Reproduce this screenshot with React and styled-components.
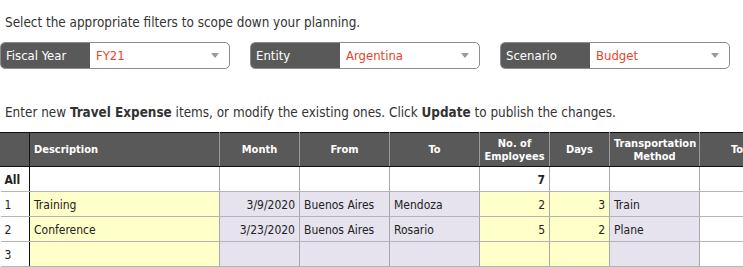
import React from 'react'
import styled, { createGlobalStyle } from 'styled-components'

const filters = [
  { label: 'Fiscal Year', value: 'FY21' },
  { label: 'Entity', value: 'Argentina' },
  { label: 'Scenario', value: 'Budget' },
]

const columns = [
  { title: '', width: 29 },
  { title: 'Description', width: 190, align: 'left' },
  { title: 'Month', width: 80 },
  { title: 'From', width: 90 },
  { title: 'To', width: 90 },
  { title: 'No. of Employees', width: 70 },
  { title: 'Days', width: 60 },
  { title: 'Transportation Method', width: 90 },
  { title: 'Total', width: 90 },
]

// tone per column: w = white, y = yellow, p = lavender
const tones = ['w', 'y', 'p', 'p', 'p', 'y', 'y', 'p', 'w']

const rows = [
  ['1', 'Training', '3/9/2020', 'Buenos Aires', 'Mendoza', '2', '3', 'Train', ''],
  ['2', 'Conference', '3/23/2020', 'Buenos Aires', 'Rosario', '5', '2', 'Plane', ''],
  ['3', '', '', '', '', '', '', '', ''],
]

const rightAligned = [2, 5, 6]

function App() {
  return (
    <Page>
      <GlobalStyle />
      <Intro>Select the appropriate filters to scope down your planning.</Intro>
      <FilterBar>
        {filters.map(f => (
          <Select key={f.label}>
            <SelectLabel>{f.label}</SelectLabel>
            <SelectValue>{f.value}</SelectValue>
            <Caret />
          </Select>
        ))}
      </FilterBar>
      <Hint>
        Enter new <b>Travel Expense</b> items, or modify the existing ones. Click <b>Update</b> to publish the changes.
      </Hint>
      <Grid>
        <colgroup>
          {columns.map((c, i) => <col key={i} style={{ width: c.width }} />)}
        </colgroup>
        <thead>
          <tr>
            {columns.map((c, i) => (
              <HeadCell key={i} $first={i === 0} $align={c.align}>{c.title}</HeadCell>
            ))}
          </tr>
        </thead>
        <tbody>
          <tr>
            <Cell $first $bold>All</Cell>
            <Cell />
            <Cell />
            <Cell />
            <Cell />
            <Cell $right $bold>7</Cell>
            <Cell />
            <Cell />
            <Cell />
          </tr>
          {rows.map(r => (
            <tr key={r[0]}>
              {r.map((v, i) => (
                <Cell
                  key={i}
                  $first={i === 0}
                  $tone={i === 0 ? 'w' : tones[i]}
                  $right={rightAligned.includes(i)}
                >
                  {v}
                </Cell>
              ))}
            </tr>
          ))}
        </tbody>
      </Grid>
    </Page>
  )
}

export default App

const GlobalStyle = createGlobalStyle`
  html, body {
    margin: 0;
    background: #fff;
    overflow: hidden;
  }
  body {
    font-family: "DejaVu Sans Condensed", "DejaVu Sans", sans-serif;
    color: #222;
  }
`

const Page = styled.div`
  width: 743px;
  height: 267px;
  overflow: hidden;
`

const Intro = styled.div`
  padding: 14px 0 0 5px;
  height: 18px;
  line-height: 18px;
  font-size: 13.4px;
  color: #333;
`

const FilterBar = styled.div`
  display: flex;
  gap: 20px;
  margin-top: 10px;
`

const Select = styled.div`
  position: relative;
  display: flex;
  width: 230px;
  height: 27px;
  box-sizing: border-box;
  border: 1px solid #8c8c8c;
  border-radius: 5px;
  overflow: hidden;
  font-size: 13px;
  line-height: 25px;
`

const SelectLabel = styled.div`
  width: 89px;
  flex: none;
  background: #595959;
  color: #fff;
  padding-left: 5px;
  box-sizing: border-box;
`

const SelectValue = styled.div`
  flex: 1;
  padding-left: 6px;
  color: #e8442a;
`

const Caret = styled.span`
  position: absolute;
  right: 10px;
  top: 10px;
  width: 0;
  height: 0;
  border-left: 4px solid transparent;
  border-right: 4px solid transparent;
  border-top: 5px solid #9a9a9a;
`

const Hint = styled.div`
  margin-top: 35px;
  padding-left: 5px;
  height: 18px;
  line-height: 18px;
  font-size: 13.4px;
  color: #333;
`

const Grid = styled.table`
  margin-top: 10px;
  table-layout: fixed;
  width: 789px;
  border-collapse: collapse;
  font-size: 12px;
`

const HeadCell = styled.th`
  height: 34px;
  box-sizing: border-box;
  padding: 0 4px;
  background: #595959;
  color: #fff;
  font-weight: bold;
  font-size: 11px;
  line-height: 13px;
  white-space: ${p => (p.$align ? 'nowrap' : 'normal')};
  overflow: hidden;
  text-align: ${p => p.$align || 'center'};
  border-top: 1px solid #111;
  border-bottom: 1px solid #111;
  border-left: 1px solid #9a9a9a;
  border-right: ${p => (p.$first ? '1px solid #111' : '1px solid #9a9a9a')};
  &:first-child {
    border-left: 1px solid #595959;
  }
`

const toneColors = { w: '#fff', y: '#ffffc9', p: '#e6e3ee' }

const Cell = styled.td`
  height: 25px;
  box-sizing: border-box;
  padding: 1px 4px 0;
  white-space: nowrap;
  overflow: hidden;
  background: ${p => toneColors[p.$tone || 'w']};
  color: #222;
  font-weight: ${p => (p.$bold ? 'bold' : 'normal')};
  text-align: ${p => (p.$right ? 'right' : 'left')};
  border-bottom: 1px solid #b4b4b4;
  border-left: 1px solid #a8a8a8;
  border-right: ${p => (p.$first ? '1px solid #111' : '1px solid #a8a8a8')};
  &:first-child {
    border-left: none;
  }
`
